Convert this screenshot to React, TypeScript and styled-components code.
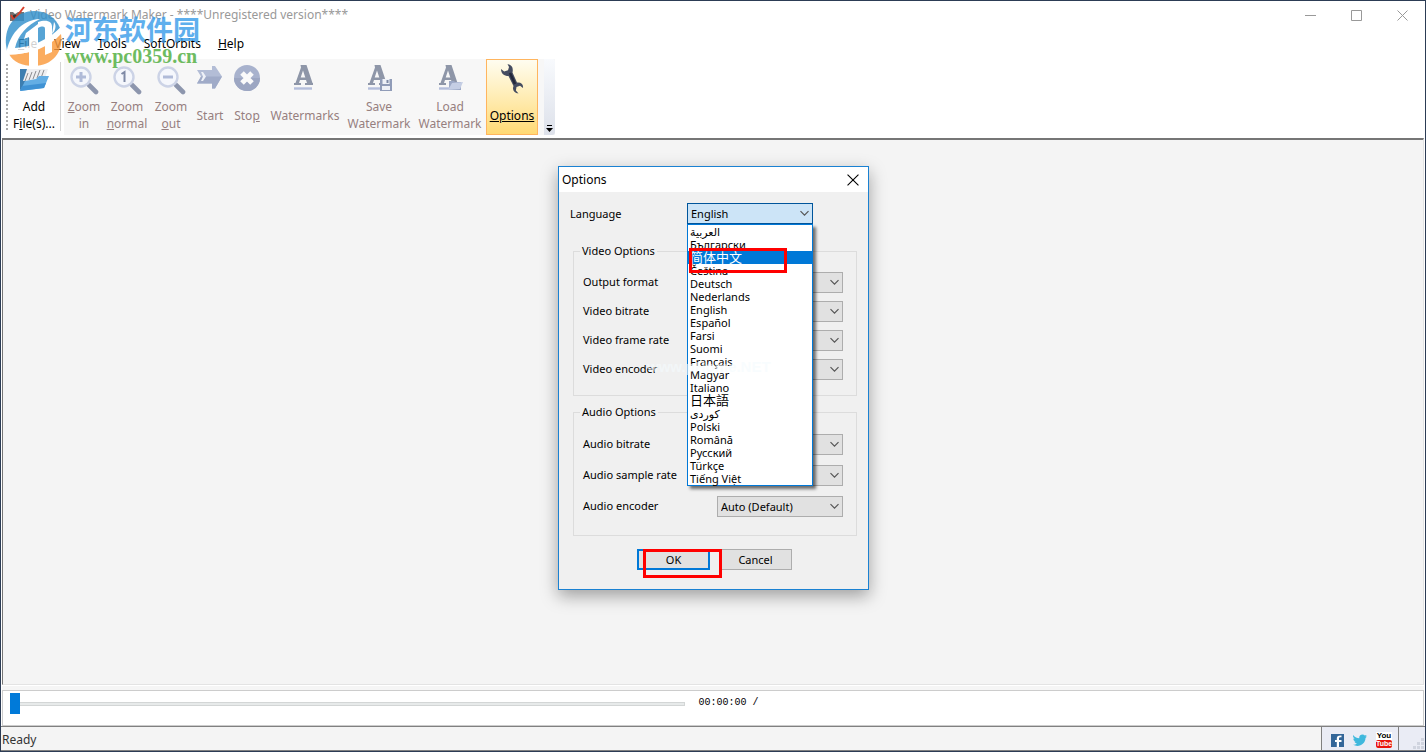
import React from "react";
import styled, { createGlobalStyle, css } from "styled-components";

const UI = `"Noto Sans", "Noto Sans CJK SC", "DejaVu Sans", sans-serif`;

const GlobalStyle = createGlobalStyle`
  *, *::before, *::after { box-sizing: border-box; }
  body { margin: 0; background: #fff; font-family: ${UI}; font-size: 12px; color: #000; }
  button, select, input { font-family: inherit; font-size: inherit; color: inherit; margin: 0; }
`;

/* ---------- main window ---------- */

const Window = styled.div`
  position: relative;
  display: flex;
  flex-direction: column;
  min-height: 100vh;
  border: 1px solid #2c3c55;
  background: #fff;
`;

const TitleBar = styled.header`
  display: flex;
  align-items: center;
  height: 28px;
  padding-left: 8px;
  color: #999;
`;

const AppTitle = styled.h1`
  flex: 1;
  margin: 0 0 0 5px;
  font-size: 12px;
  line-height: 20px;
  font-weight: 400;
  white-space: nowrap;
`;

const CaptionButton = styled.button`
  display: grid;
  place-items: center;
  width: 46px;
  height: 28px;
  padding: 0;
  border: 0;
  background: none;
`;

const MenuBar = styled.nav`
  display: flex;
  align-items: center;
  gap: 17px;
  height: 30px;
  padding-left: 17px;
`;

const MenuItem = styled.button`
  padding: 0;
  border: 0;
  background: none;
  line-height: 20px;
`;

const ToolBar = styled.div`
  display: flex;
  height: 79px;
  padding: 0 0 3px 5px;
`;

const Grip = styled.div`
  width: 2px;
  margin: 5px 0;
  background: repeating-linear-gradient(#aaa 0 2px, transparent 2px 4px);
`;

const ToolGroup = styled.div`
  display: flex;
  background: #f7f7f7;
`;

const Separator = styled.div`
  width: 1px;
  margin: 3px 3px 4px 0;
  background: #d4d4d4;
`;

const ToolButton = styled.button<{ $w: number; $active?: boolean; $enabled?: boolean }>`
  display: flex;
  flex-direction: column;
  align-items: center;
  width: ${(p) => p.$w}px;
  padding: 4px 0 0;
  border: 1px solid transparent;
  background: none;
  color: ${(p) => (p.$enabled ? "#000" : "#967f7f")};
  white-space: nowrap;
  ${(p) =>
    p.$active &&
    css`
      border-color: #ffb55e;
      background: linear-gradient(#fffdf0, #ffe9a8 60%, #ffd974);
    `}
`;

const ToolLabel = styled.span`
  display: grid;
  align-content: center;
  height: 34px;
  margin-top: 2px;
  line-height: 17px;
  text-align: center;
`;

const Overflow = styled.button`
  display: flex;
  align-items: flex-end;
  justify-content: center;
  width: 11px;
  margin-left: 6px;
  padding: 0 0 2px;
  border: 0;
  border-radius: 0 3px 3px 0;
  background: linear-gradient(#f8fafd, #dde1ea);
`;

const Workspace = styled.main`
  flex: 1;
  margin: 0 1px 0 1px;
  border-top: 2px solid #767676;
  border-left: 1px solid #767676;
  border-right: 1px solid #e3e3e3;
  border-bottom: 1px solid #e3e3e3;
  background: #f4f4f4;
`;

const Player = styled.section`
  display: flex;
  align-items: flex-start;
  gap: 14px;
  height: 36px;
  margin: 5px 1px 0;
  padding-top: 2px;
  border: 1px solid #ccc;
  box-shadow: 0 -4px 0 #f5f5f5;
`;

const Seek = styled.label`
  flex: 0 0 48%;
  padding-left: 7px;
`;

const Range = styled.input`
  display: block;
  width: 100%;
  height: 21px;
  background: none;
  appearance: none;
  &::-webkit-slider-runnable-track {
    height: 4px;
    border: 1px solid #d3d6d6;
    background: #e7eaea;
  }
  &::-webkit-slider-thumb {
    appearance: none;
    width: 10px;
    height: 21px;
    margin: -10px 0 0 -1px;
    background: #007ad9;
  }
`;

const Time = styled.output`
  font: 10px/19px "Liberation Mono", monospace;
  white-space: pre;
`;

const StatusBar = styled.footer`
  display: flex;
  height: 25px;
  border-top: 1px solid #808080;
  border-bottom: 1px solid #808080;
  background: #f4f4f4;
`;

const StatusText = styled.p`
  flex: 1;
  margin: 0;
  padding: 3px 1px 0;
  line-height: 20px;
  color: #333;
`;

const SocialLinks = styled.div`
  display: flex;
  align-items: center;
  gap: 9px;
  padding: 3px 6px 0 9px;
  border-left: 1px solid #808080;
  border-right: 1px solid #808080;
  background: #eaecf5;
  a { display: block; line-height: 0; text-decoration: none; }
`;

const SizeGrip = styled.div`
  display: flex;
  align-items: flex-end;
  justify-content: flex-end;
  width: 26px;
  padding: 1px;
  background: #eaecf5;
`;

/* ---------- options dialog ---------- */

const Overlay = styled.div`
  position: absolute;
  inset: 0;
  display: grid;
  place-items: center;
  padding: 4px 0 0 1px;
  pointer-events: none;
`;

const Dialog = styled.section`
  position: relative;
  width: 311px;
  border: 1px solid #1a81d2;
  background: #f0f0f0;
  box-shadow: 0 6px 16px rgba(0, 0, 0, 0.35);
  font-size: 11px;
  pointer-events: auto;
`;

const DialogTitle = styled.div`
  display: flex;
  align-items: center;
  justify-content: space-between;
  height: 25px;
  padding: 0 9px 0 3px;
  background: #fff;
  h2 { margin: 0; font-size: 12px; font-weight: 400; line-height: 16px; }
  button { display: grid; padding: 0; border: 0; background: none; }
`;

const DialogBody = styled.form`
  padding: 11px 11px 19px;
`;

const LanguageRow = styled.div`
  position: relative;
  display: grid;
  grid-template-columns: 117px 126px;
  align-items: center;
`;

const Group = styled.fieldset<{ $gap: number }>`
  display: grid;
  gap: ${(p) => p.$gap}px;
  margin: 0 0 0 3px;
  padding: 13px 13px 15px 9px;
  border: 1px solid #dcdcdc;
  legend { margin-left: -3px; padding: 0 2px; line-height: 16px; }
`;

const VideoGroup = styled(Group)`
  margin-top: 19px;
`;

const AudioGroup = styled(Group)`
  margin-top: 8px;
  padding-top: 14px;
  padding-bottom: 18px;
`;

const Field = styled.div`
  display: grid;
  grid-template-columns: 1fr 126px;
  align-items: center;
  label { padding-bottom: 2px; }
`;

const SelectBox = styled.div`
  position: relative;
  svg { position: absolute; right: 4px; top: 7px; pointer-events: none; }
`;

const Select = styled.select<{ $open?: boolean }>`
  display: block;
  width: 100%;
  height: 21px;
  padding: 0 3px;
  appearance: none;
  border: 1px solid ${(p) => (p.$open ? "#00559b" : "#adadad")};
  border-radius: 0;
  background: ${(p) => (p.$open ? "#cce4f7" : "#e1e1e1")};
  line-height: 19px;
`;

const ListBox = styled.ul`
  position: absolute;
  z-index: 2;
  top: 21px;
  left: 117px;
  width: 126px;
  margin: 0;
  padding: 0;
  border: 1px solid #0078d7;
  background: #fff;
  box-shadow: 3px 3px 3px rgba(0, 0, 0, 0.55);
  list-style: none;
`;

const Option = styled.li<{ $selected?: boolean; $cjk?: boolean }>`
  height: 13px;
  padding-left: 2px;
  font-size: ${(p) => (p.$cjk ? 13 : 11)}px;
  line-height: 13px;
  ${(p) =>
    p.$selected &&
    css`
      position: relative;
      color: #fff;
      background: #0078d7;
    `}
`;

const Actions = styled.div`
  display: flex;
  gap: 9px;
  margin: 13px 0 0 67px;
`;

const PushButton = styled.button<{ $primary?: boolean }>`
  width: 73px;
  height: 21px;
  padding: 0;
  border: ${(p) => (p.$primary ? "2px solid #0078d7" : "1px solid #adadad")};
  background: #e1e1e1;
`;

const Marked = styled.div`
  position: relative;
  display: flex;
`;

const marker = css`
  position: absolute;
  z-index: 3;
  border: 3px solid #f00;
  pointer-events: none;
`;

const OkMarker = styled.span`
  ${marker}
  top: 0;
  left: 6px;
  width: 79px;
  height: 29px;
`;

const LanguageMarker = styled.span`
  ${marker}
  top: 45px;
  left: 119px;
  width: 98px;
  height: 25px;
`;

/* ---------- overlays ---------- */

const SiteMark = styled.div`
  position: absolute;
  z-index: 4;
  top: 8px;
  left: 3px;
  display: flex;
  gap: 1px;
  opacity: 0.82;
  pointer-events: none;
`;

const SiteName = styled.div`
  padding-top: 5px;
  font: 700 27px/30px "Noto Sans CJK SC", sans-serif;
  color: #3c9eea;
  white-space: nowrap;
  span { display: block; font: 700 20px/24px "Liberation Serif", serif; color: #4fae3e; }
`;

const FaintMark = styled.div`
  position: absolute;
  z-index: 4;
  top: 189px;
  left: 88px;
  font: 700 15px/22px "Liberation Sans", sans-serif;
  color: rgba(244, 251, 254, 0.6);
  white-space: nowrap;
  pointer-events: none;
`;

/* ---------- drawings ---------- */

const Chevron = () => (
  <svg width="9" height="7" viewBox="0 0 9 7" fill="none" stroke="#555" strokeWidth="1.2">
    <path d="M.5 1.2 4.5 5.2 8.5 1.2" />
  </svg>
);

const Cross = ({ size, color }: { size: number; color: string }) => (
  <svg width={size} height={size} viewBox="0 0 11 11" stroke={color} strokeWidth="1">
    <path d="M.5.5l10 10M10.5.5l-10 10" />
  </svg>
);

const AppIcon = () => (
  <svg width="16" height="18" viewBox="0 0 16 18">
    <path d="M1 6h3l2 2 3-2h6v9H1z" fill="#737373" />
    <circle cx="6" cy="11" r="2.5" fill="#333" />
    <path d="M2 9l3 5L15 1" fill="none" stroke="#d8402c" strokeWidth="2" />
  </svg>
);

const Magnifier = ({ children }: { children: React.ReactNode }) => (
  <svg width="30" height="32" viewBox="0 0 30 32">
    <path d="M20 21l7 7" stroke="#8d96ad" strokeWidth="4.6" strokeLinecap="round" />
    <circle cx="12" cy="13" r="9.5" fill="#f5f7fc" stroke="#ccd3e6" strokeWidth="2.4" />
    {children}
  </svg>
);

const ZoomInIcon = () => (
  <Magnifier><path d="M7 13h10M12 8v10" stroke="#b0bbd8" strokeWidth="3" /></Magnifier>
);
const ZoomNormalIcon = () => (
  <Magnifier><path d="M9.5 10l3-2v10" fill="none" stroke="#7f8aa6" strokeWidth="2" /></Magnifier>
);
const ZoomOutIcon = () => (
  <Magnifier><path d="M7 13h10" stroke="#b0bbd8" strokeWidth="3" /></Magnifier>
);

const AddIcon = () => (
  <svg width="32" height="32" viewBox="0 0 32 32">
    <path d="M2 5h7l1 3-5 17-3 1z" fill="#3d7eb0" />
    <path d="M9 5h21l-4 12H5z" fill="#efeff1" />
    <path d="M10 9l-3 8M14 8l-3 8M18 7l-3 8M22 6l-3 8M26 6l-3 8" stroke="#8c8c90" />
    <path d="M7 17l11-2 3-3h10l-5 12-24 3z" fill="#64aee4" />
    <path d="M4 22l24-3-2 5-24 3z" fill="#3f92d4" />
  </svg>
);

const StartIcon = () => (
  <svg width="28" height="32" viewBox="0 0 28 32">
    <path d="M1 6h15V2h3l7 10.500-7 12h-3v-5H1l4-7z" fill="#b3bdd6" />
    <path d="M1 19.500l4-7h21l-7 12h-3v-5z" fill="#a0abc8" />
    <path d="M5 8h2l3 4.500L7 17H5l2-4.500z" fill="#eef1f8" />
  </svg>
);

const StopIcon = () => (
  <svg width="28" height="32" viewBox="0 0 28 32">
    <circle cx="14" cy="14" r="13" fill="#a8b2cd" />
    <path d="M1 14a13 13 0 0 0 26 0z" fill="#9ca6c2" />
    <path d="M9 9l10 10M19 9L9 19" stroke="#fafafa" strokeWidth="5" />
  </svg>
);

const LetterMark = ({ children }: { children?: React.ReactNode }) => (
  <svg width="26" height="32" viewBox="0 0 26 32">
    <path
      fillRule="evenodd"
      d="M8.500 1h6l6 18H21v2h-8v-2h2l-1-3H8l-1 3h2v2H2v-2h1.500L9 3.500zM11 6.500L8.700 13.500h4.600z"
      fill="#8e96a8"
    />
    <path d="M2 24.500h18" stroke="#b4bedb" strokeWidth="2.400" />
    {children}
  </svg>
);

const SaveMarkIcon = () => (
  <LetterMark>
    <path d="M14 15h12v12H14z" fill="#909cb8" />
    <path d="M16.500 15h7v5h-7zM16 22h8v4h-8z" fill="#eef1f7" />
    <path d="M20.500 16h2v3h-2z" fill="#7d89a5" />
  </LetterMark>
);

const LoadMarkIcon = () => (
  <LetterMark>
    <path d="M12 17h5l1 1h6v8H12z" fill="#9ca8c5" />
    <path d="M15 19l11-1-3 7-12 1z" fill="#c5cee4" />
  </LetterMark>
);

const WrenchIcon = () => (
  <svg width="26" height="32" viewBox="0 0 26 32">
    <path
      d="M8.500 0C13 1 14.500 4 13.500 8.500l4.500 10c4-.5 6.500 1.500 6 5.500l-3-2.200-3.500 1.200-.6 3.500 2.600 3c-4.500-.5-6.500-3.500-5-7.500L9.500 12C5 12 2 9.500 2 5l3.200 2.400 3.800-1.200 1-3.200z"
      fill="#454c60"
    />
    <path d="M11 9l5 11" stroke="#23283a" strokeWidth="2.500" />
  </svg>
);

const Facebook = () => (
  <svg width="13" height="13" viewBox="0 0 13 13">
    <path d="M0 0h13v13H0z" fill="#336699" />
    <path d="M8 13V8h2.500V6H8V4.500c0-1 .5-1.200 2.500-1.200V1.500C7 1.200 5.800 2.500 5.800 4.500V6H4v2h1.800v5z" fill="#fff" />
  </svg>
);

const Twitter = () => (
  <svg width="14" height="13" viewBox="0 0 14 13">
    <path
      d="M0 1c2 2.500 4 3.200 6.200 3.300C6 1.500 8 .5 9.500.6c1 0 1.700.4 2.200 1L13.600 1l-1 1.700 1.400-.2-1.500 1.600C12.500 10 6 14 0 10.800c1.800 0 3-.4 4-1.300-1.500-.2-2.200-1-2.600-2h1.200C1 7 .4 6 .3 4.500l1.300.3C.2 3.700-.2 2.300 0 1z"
      fill="#3fb8dd"
    />
  </svg>
);

const YouTubeBadge = styled.span`
  display: block;
  width: 16px;
  font: 700 8px/8px "Liberation Sans", sans-serif;
  text-align: center;
  color: #000;
  background: #fff;
  b { display: block; border-radius: 2px; background: #e8130c; color: #fff; font-size: 7px; }
`;

const SiteLogo = () => (
  <svg width="60" height="60" viewBox="0 0 60 60">
    <path d="M2 36C0 16 13 2 30 2c13 0 22 7 26 17C44 34 26 42 3 42z" fill="#3391cc" />
    <path d="M5 45c20 1 39-6 52-20 3 18-9 32-27 32C18 57 9 53 5 45z" fill="#fb9a3d" />
    <path d="M2 46C5 26 17 11 36 10 23 16 14 26 11 39c17-1 33-8 46-21C48 35 29 46 2 46z" fill="#fff" />
    <path d="M22 24l12-9v42h-9V28l-5 2z" fill="#fff" />
    <path d="M34 13c8-3 15-1 14 6v24l-7 3V20c0-3-3-3-7-1z" fill="#fff" />
    <path d="M50 13c3 4 1 9-2 12z" fill="#fff" />
  </svg>
);

/* ---------- data ---------- */

type Tool = { icon: React.ReactNode; label: React.ReactNode; width: number; active?: boolean };

const tools: Tool[] = [
  { icon: <ZoomInIcon />, label: <><span><u>Z</u>oom</span><span>in</span></>, width: 40 },
  { icon: <ZoomNormalIcon />, label: <><span>Zoom</span><span><u>n</u>ormal</span></>, width: 46 },
  { icon: <ZoomOutIcon />, label: <><span>Zoom</span><span><u>o</u>ut</span></>, width: 42 },
  { icon: <StartIcon />, label: <span>Start</span>, width: 36 },
  { icon: <StopIcon />, label: <span>Sto<u>p</u></span>, width: 38 },
  { icon: <LetterMark />, label: <span>Watermarks</span>, width: 78 },
  { icon: <SaveMarkIcon />, label: <><span>Save</span><span>Watermark</span></>, width: 70 },
  { icon: <LoadMarkIcon />, label: <><span>Load</span><span>Watermark</span></>, width: 72 },
  { icon: <WrenchIcon />, label: <u>Options</u>, width: 52, active: true },
];

const languages = [
  "العربية", "Български", "简体中文", "Čeština", "Deutsch", "Nederlands", "English", "Español",
  "Farsi", "Suomi", "Français", "Magyar", "Italiano", "日本語", "كوردی", "Polski", "Română",
  "Русский", "Türkçe", "Tiếng Việt",
];

const Choice = ({ id, label, value }: { id: string; label: string; value: string }) => (
  <Field>
    <label htmlFor={id}>{label}</label>
    <SelectBox>
      <Select id={id}><option>{value}</option></Select>
      <Chevron />
    </SelectBox>
  </Field>
);

const OptionsDialog = () => (
  <Dialog role="dialog" aria-labelledby="options-title">
    <DialogTitle>
      <h2 id="options-title">Options</h2>
      <button aria-label="Close dialog"><Cross size={12} color="#000" /></button>
    </DialogTitle>
    <DialogBody onSubmit={(e) => e.preventDefault()}>
      <LanguageRow>
        <label htmlFor="language">Language</label>
        <SelectBox>
          <Select id="language" $open><option>English</option></Select>
          <Chevron />
        </SelectBox>
        <ListBox role="listbox" aria-label="Languages">
          {languages.map((name, i) => (
            <Option key={name} role="option" aria-selected={i === 2} $selected={i === 2} $cjk={i === 2 || i === 13}>
              {name}
            </Option>
          ))}
        </ListBox>
        <LanguageMarker />
      </LanguageRow>
      <VideoGroup $gap={8}>
        <legend>Video Options</legend>
        <Choice id="format" label="Output format" value="" />
        <Choice id="vbitrate" label="Video bitrate" value="" />
        <Choice id="framerate" label="Video frame rate" value="" />
        <Choice id="vencoder" label="Video encoder" value="" />
      </VideoGroup>
      <AudioGroup $gap={10}>
        <legend>Audio Options</legend>
        <Choice id="abitrate" label="Audio bitrate" value="" />
        <Choice id="samplerate" label="Audio sample rate" value="" />
        <Choice id="aencoder" label="Audio encoder" value="Auto (Default)" />
      </AudioGroup>
      <Actions>
        <Marked>
          <PushButton type="submit" $primary>OK</PushButton>
          <OkMarker />
        </Marked>
        <PushButton type="button">Cancel</PushButton>
      </Actions>
    </DialogBody>
    <FaintMark>www.pHome.NET</FaintMark>
  </Dialog>
);

export default function App() {
  return (
    <>
      <GlobalStyle />
      <Window>
        <TitleBar>
          <AppIcon />
          <AppTitle>Video Watermark Maker - ****Unregistered version****</AppTitle>
          <CaptionButton aria-label="Minimize">
            <svg width="11" height="11" stroke="#999"><path d="M0 5.500h11" /></svg>
          </CaptionButton>
          <CaptionButton aria-label="Maximize">
            <svg width="11" height="11" stroke="#999" fill="none"><path d="M.5.5h10v10H.5z" /></svg>
          </CaptionButton>
          <CaptionButton aria-label="Close"><Cross size={11} color="#999" /></CaptionButton>
        </TitleBar>
        <MenuBar>
          <MenuItem><u>F</u>ile</MenuItem>
          <MenuItem><u>V</u>iew</MenuItem>
          <MenuItem><u>T</u>ools</MenuItem>
          <MenuItem>SoftOrbits</MenuItem>
          <MenuItem><u>H</u>elp</MenuItem>
        </MenuBar>
        <ToolBar role="toolbar">
          <Grip />
          <ToolButton $w={52} $enabled>
            <AddIcon />
            <ToolLabel><span>Add</span><span>F<u>i</u>le(s)...</span></ToolLabel>
          </ToolButton>
          <Separator />
          <ToolGroup>
            {tools.map((tool, i) => (
              <ToolButton key={i} $w={tool.width} $active={tool.active} $enabled={tool.active}>
                {tool.icon}
                <ToolLabel>{tool.label}</ToolLabel>
              </ToolButton>
            ))}
            <Overflow aria-label="More tools">
              <svg width="7" height="8"><path d="M1 0h5v1H1zM0 3h7L3.500 7z" fill="#000" /></svg>
            </Overflow>
          </ToolGroup>
        </ToolBar>
        <Workspace />
        <Player>
          <Seek><Range type="range" min="0" max="100" defaultValue="0" aria-label="Position" /></Seek>
          <Time>00:00:00 /</Time>
        </Player>
        <StatusBar>
          <StatusText>Ready</StatusText>
          <SocialLinks>
            <a href="#facebook" aria-label="Facebook"><Facebook /></a>
            <a href="#twitter" aria-label="Twitter"><Twitter /></a>
            <a href="#youtube"><YouTubeBadge>You<b>Tube</b></YouTubeBadge></a>
          </SocialLinks>
          <SizeGrip>
            <svg width="11" height="11" fill="#d0d4df">
              <path d="M8 0h3v3H8zM4 4h3v3H4zM8 4h3v3H8zM0 8h3v3H0zM4 8h3v3H4zM8 8h3v3H8z" />
            </svg>
          </SizeGrip>
        </StatusBar>
        <Overlay><OptionsDialog /></Overlay>
        <SiteMark>
          <SiteLogo />
          <SiteName>河东软件园<span>www.pc0359.cn</span></SiteName>
        </SiteMark>
      </Window>
    </>
  );
}
